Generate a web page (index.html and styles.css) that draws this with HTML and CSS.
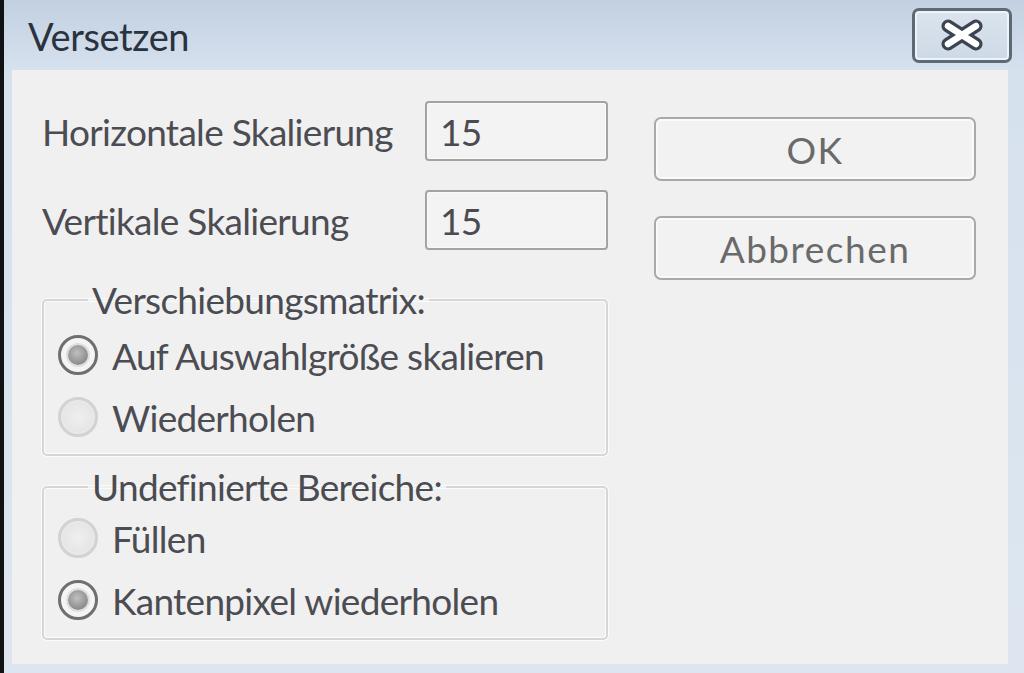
FILE: index.html
```html
<!DOCTYPE html>
<html lang="de">
<head>
<meta charset="utf-8">
<title>Versetzen</title>
<link rel="stylesheet" href="styles.css">
</head>
<body>
<div class="window">
  <div class="titlebar">
    <span class="title">Versetzen</span>
    <button class="close" type="button" aria-label="Schließen">
      <svg width="46" height="32" viewBox="0 0 46 32">
        <path d="M9 7 L37 25 M37 7 L9 25" stroke="#3b4450" stroke-width="13" stroke-linecap="round" fill="none"/>
        <path d="M9 7 L37 25 M37 7 L9 25" stroke="#ffffff" stroke-width="6.5" stroke-linecap="round" fill="none"/>
      </svg>
    </button>
  </div>
  <div class="content">
    <div class="left">
      <div class="field-row">
        <span class="label">Horizontale Skalierung</span>
        <span class="input">15</span>
      </div>
      <div class="field-row">
        <span class="label">Vertikale Skalierung</span>
        <span class="input">15</span>
      </div>
      <fieldset class="group group-first">
        <legend class="legend">Verschiebungsmatrix:</legend>
        <div class="option"><span class="radio checked"></span><span class="opt-label">Auf Auswahlgröße skalieren</span></div>
        <div class="option"><span class="radio"></span><span class="opt-label">Wiederholen</span></div>
      </fieldset>
      <fieldset class="group group-second">
        <legend class="legend">Undefinierte Bereiche:</legend>
        <div class="option"><span class="radio"></span><span class="opt-label">Füllen</span></div>
        <div class="option"><span class="radio checked"></span><span class="opt-label">Kantenpixel wiederholen</span></div>
      </fieldset>
    </div>
    <div class="right">
      <button class="btn" type="button">OK</button>
      <button class="btn" type="button">Abbrechen</button>
    </div>
  </div>
</div>
</body>
</html>
```

FILE: styles.css
```css
html, body {
  margin: 0;
  padding: 0;
}
body {
  width: 1024px;
  height: 673px;
  overflow: hidden;
  background: #101214;
  font-family: "Lato", "Liberation Sans", sans-serif;
}
.window {
  margin-left: 4px;
  height: 673px;
  display: flex;
  flex-direction: column;
  background: linear-gradient(to bottom, #c2d0e1 0px, #d6e1ee 70px, #dde6f0 100%);
}
.titlebar {
  height: 70px;
  flex: none;
  display: flex;
  align-items: center;
  justify-content: space-between;
  padding: 0 12px 0 24px;
}
.title {
  font-size: 38px;
  letter-spacing: -0.4px;
  color: #2a323e;
  margin-top: 2px;
}
.close {
  width: 100px;
  height: 55px;
  border: 3px solid #5f6976;
  border-radius: 7px;
  background: linear-gradient(to bottom, #dbe4ee, #cdd9e6);
  box-shadow: inset 0 0 0 2px #eef3f8;
  display: flex;
  align-items: center;
  justify-content: center;
  padding: 0;
}
.content {
  flex: 1;
  margin: 0 16px 9px 8px;
  background: #f0f0f0;
  display: flex;
  padding: 31px 0 0 30px;
  color: #4c4c53;
}
.left {
  width: 566px;
  display: flex;
  flex-direction: column;
}
.field-row {
  height: 60px;
  display: flex;
  align-items: center;
  justify-content: space-between;
  margin-bottom: 29px;
}
.label {
  font-size: 37px;
  letter-spacing: -0.7px;
  margin-top: 1px;
}
.input {
  width: 183px;
  height: 60px;
  box-sizing: border-box;
  border: 2px solid #a3a3a3;
  border-radius: 4px;
  background: #f3f3f3;
  box-shadow: inset 0 0 0 1px #fafafa;
  font-size: 37px;
  letter-spacing: -0.7px;
  color: #4a4a50;
  padding-left: 13px;
  display: flex;
  align-items: center;
}
.group {
  margin: 0;
  border: 2px solid #d6d6d6;
  border-radius: 5px;
  box-shadow: inset 0 0 0 1px #fbfbfb, 0 0 0 1px #fbfbfb;
  padding: 4px 0 6px 14px;
  min-width: 0;
}
.group-first {
  margin-top: 1px;
}
.group-second {
  margin-top: 11px;
  padding-top: 0;
  padding-bottom: 7px;
}
.legend {
  font-size: 37px;
  letter-spacing: -0.7px;
  line-height: 40px;
  padding: 0 4px;
  margin-left: 30px;
  color: #4b4b52;
}
.option {
  height: 62px;
  display: flex;
  align-items: center;
}
.opt-label {
  font-size: 37px;
  letter-spacing: -0.7px;
  margin-left: 14px;
}
.radio {
  width: 40px;
  height: 40px;
  box-sizing: border-box;
  border-radius: 50%;
  border: 3px solid #d2d2d2;
  background: radial-gradient(circle, #efefef 0, #e6e6e6 60%, #f6f6f6 100%);
  display: flex;
  align-items: center;
  justify-content: center;
}
.radio.checked {
  border-color: #6f6f6f;
  background: #f4f4f4;
}
.radio.checked::after {
  content: "";
  width: 20px;
  height: 20px;
  border-radius: 50%;
  background: radial-gradient(circle at 45% 40%, #c0c0c0 0, #8c8c8c 70%, #7a7a7a 100%);
  box-shadow: 0 0 0 2px #dedede;
}
.right {
  margin-left: 46px;
  padding-top: 16px;
  display: flex;
  flex-direction: column;
  gap: 35px;
}
.btn {
  width: 322px;
  height: 64px;
  border: 2px solid #a9a9a9;
  border-radius: 7px;
  background: #f2f2f2;
  box-shadow: inset 0 0 0 2px #fafafa;
  font-family: "Lato", "Liberation Sans", sans-serif;
  font-size: 37px;
  letter-spacing: 1.5px;
  color: #6a6a6a;
  padding: 0;
}
```
